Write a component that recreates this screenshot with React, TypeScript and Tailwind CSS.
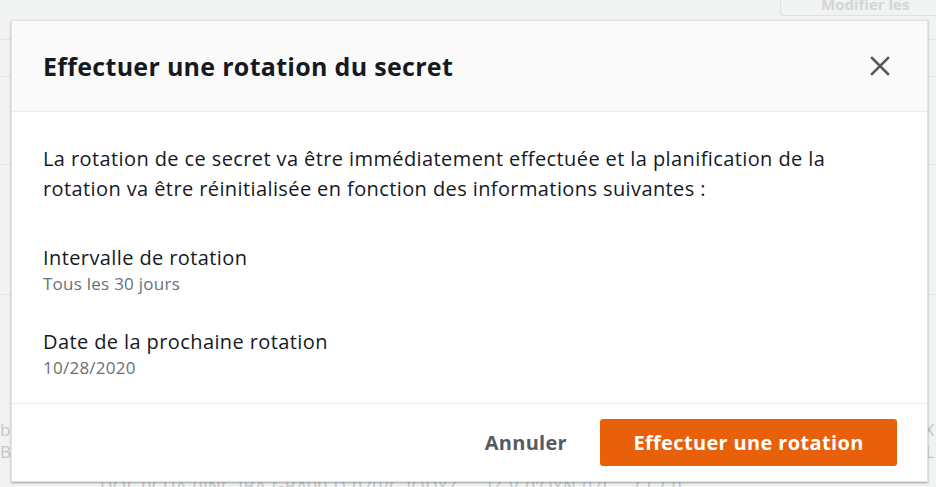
import React from 'react';

const font = { fontFamily: '"Open Sans", "Noto Sans", sans-serif' };

const CloseIcon: React.FC = () => (
  <svg width="22" height="22" viewBox="0 0 22 22" fill="none">
    <path d="M3 3L19 19M19 3L3 19" stroke="#545b64" strokeWidth="2.6" strokeLinecap="square" />
  </svg>
);

const BackgroundPage: React.FC = () => (
  <div className="flex flex-col w-full h-full text-[#c3c7c9] text-[17px]">
    <div className="h-[40px] shrink-0 flex justify-end border-b border-[#e4e6e6]">
      <div className="w-[170px] h-[16px] mr-[-14px] border-x border-b border-[#dfe2e2] rounded-b-sm bg-[#f1f2f2] px-[40px] text-[#d3d6d7] font-bold text-[15px] leading-[8px] whitespace-nowrap overflow-hidden">
        Modifier les
      </div>
    </div>
    <div className="h-[37px] shrink-0 border-b border-[#e4e6e6]" />
    <div className="h-[88px] shrink-0 border-b border-[#e4e6e6]" />
    <div className="h-[130px] shrink-0 border-b border-[#e4e6e6]" />
    <div className="shrink-0 flex flex-col pt-[126px] gap-[4px]">
      <div className="flex justify-between leading-[18px]"><span>b</span><span className="pr-[2px]">X</span></div>
      <div className="flex justify-between leading-[18px]"><span>BA</span><span className="pr-[2px]">L</span></div>
      <div className="pl-[100px] leading-[18px] mt-[12px] whitespace-nowrap tracking-wide">DOL-0CUA-0INC-IBA-GBA00-D-070/C-IODYZ-----IZ-V-0'OYN-07L----CL2-0</div>
    </div>
  </div>
);

export default function App() {
  return (
    <div className="relative w-[936px] h-[487px] overflow-hidden bg-[#f1f2f2]" style={font}>
      <BackgroundPage />

      <div className="absolute left-[11px] top-[20px] w-[917px] h-[462px] flex flex-col bg-white border border-[#e1e4e4] shadow-[0_1px_2px_rgba(0,0,0,0.35)]">
        <div className="h-[91px] shrink-0 flex items-center justify-between pl-[31px] pr-[36px] bg-[#fafafa] border-b border-[#eaeded]">
          <h2 className="text-[25px] font-bold tracking-[0.3px] text-[#16191f] leading-[30px]">Effectuer une rotation du secret</h2>
          <CloseIcon />
        </div>

        <div className="flex-1 flex flex-col pl-[31px] pt-[32px] text-[#16191f]">
          <p className="text-[20px] tracking-[0.4px] leading-[30px] w-[840px]">
            La rotation de ce secret va être immédiatement effectuée et la planification de la rotation va être réinitialisée en fonction des informations suivantes :
          </p>
          <div className="mt-[41px] flex flex-col">
            <span className="text-[20px] tracking-[0.4px] leading-[26px]">Intervalle de rotation</span>
            <span className="text-[17px] tracking-[0.25px] leading-[26px] text-[#687078]">Tous les 30 jours</span>
          </div>
          <div className="mt-[32px] flex flex-col">
            <span className="text-[20px] tracking-[0.4px] leading-[26px]">Date de la prochaine rotation</span>
            <span className="text-[17px] tracking-[0.25px] leading-[26px] text-[#687078]">10/28/2020</span>
          </div>
        </div>

        <div className="h-[78px] shrink-0 flex items-center justify-end gap-[16px] pr-[30px] border-t border-[#eaeded]">
          <button className="px-[17px] h-[47px] text-[20px] font-bold tracking-[0.3px] text-[#545b64]">Annuler</button>
          <button className="w-[297px] h-[47px] rounded-[3px] bg-[#e8610a] text-white text-[20px] font-bold tracking-[0.35px]">
            Effectuer une rotation
          </button>
        </div>
      </div>
    </div>
  );
}
